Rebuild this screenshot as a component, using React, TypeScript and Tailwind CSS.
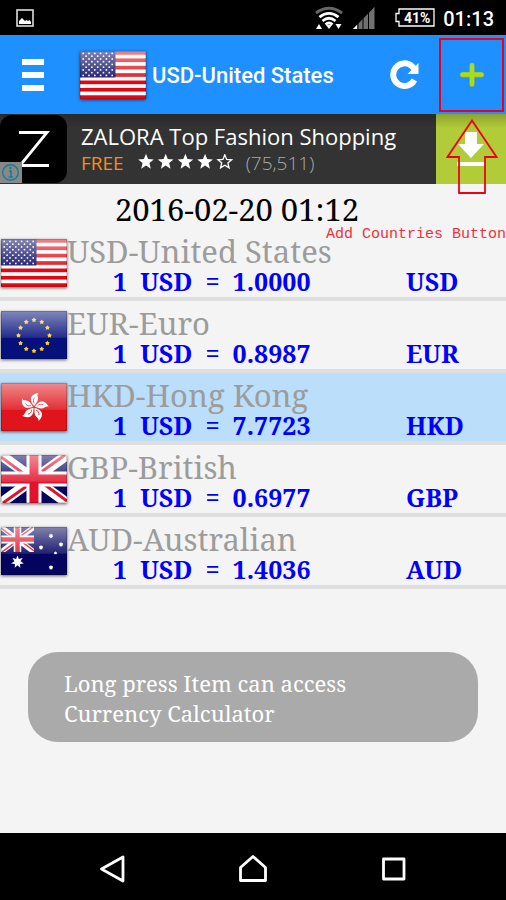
import { useId, useState } from "react";
import type { ReactNode } from "react";

type Rate = {
  code: string;
  name: string;
  value: string;
};

const rates: Rate[] = [
  { code: "USD", name: "United States", value: "1.0000" },
  { code: "EUR", name: "Euro", value: "0.8987" },
  { code: "HKD", name: "Hong Kong", value: "7.7723" },
  { code: "GBP", name: "British", value: "0.6977" },
  { code: "AUD", name: "Australian", value: "1.4036" },
];

const starPoints = (cx: number, cy: number, outer: number, inner: number, spikes = 5) =>
  Array.from({ length: spikes * 2 }, (_, i) => {
    const r = i % 2 ? inner : outer;
    const a = (Math.PI * i) / spikes - Math.PI / 2;
    return `${(cx + r * Math.cos(a)).toFixed(2)},${(cy + r * Math.sin(a)).toFixed(2)}`;
  }).join(" ");

const UsFlag = () => (
  <>
    <rect width="66" height="48" fill="#fff" />
    {[0, 1, 2, 3, 4, 5, 6].map((i) => (
      <rect key={i} y={i * 7.38} width="66" height="3.69" fill="#e30613" />
    ))}
    <rect width="35.5" height="26.5" fill="#0a0a64" />
    {Array.from({ length: 9 }, (_, row) =>
      Array.from({ length: row % 2 ? 5 : 6 }, (_, col) => (
        <circle
          key={`${row}-${col}`}
          cx={3.2 + col * 5.8 + (row % 2 ? 2.9 : 0)}
          cy={2.4 + row * 2.75}
          r="0.9"
          fill="#fff"
        />
      )),
    )}
  </>
);

const EuFlag = () => (
  <>
    <rect width="66" height="48" fill="#06107a" />
    {Array.from({ length: 12 }, (_, i) => {
      const a = (Math.PI * i) / 6;
      return (
        <polygon
          key={i}
          points={starPoints(33 + 15.5 * Math.cos(a), 24.5 + 15.5 * Math.sin(a), 2.5, 1.5)}
          fill="#f5d327"
        />
      );
    })}
  </>
);

const HkFlag = () => (
  <>
    <rect width="66" height="48" fill="#e0151b" />
    {[0, 72, 144, 216, 288].map((angle) => (
      <g key={angle} transform={`translate(33 24) rotate(${angle + 8})`}>
        <path d="M0 -1C-3 -3 -5.5 -7 -3.5 -10.5C-2 -13 1 -14 2.5 -14.5C0.5 -12 3.5 -10 2.8 -7C2.2 -4.5 0.8 -3 0 -1Z" fill="#fff" />
        <path d="M-0.3 -3.5C-2 -5.5 -1.8 -8 -0.5 -9.5" fill="none" stroke="#e0151b" strokeWidth="0.8" />
      </g>
    ))}
  </>
);

const UnionJack = () => (
  <>
    <rect width="66" height="48" fill="#04045f" />
    <path d="M0 0L66 48M66 0L0 48" stroke="#fff" strokeWidth="10" />
    <path d="M0 2L30 24M66 46L36 24M64 0L33 22M2 48L33 26" stroke="#e2142d" strokeWidth="3" />
    <path d="M33 0V48M0 24H66" stroke="#fff" strokeWidth="15" />
    <path d="M33 0V48M0 24H66" stroke="#e2142d" strokeWidth="9" />
  </>
);

const AuFlag = () => (
  <>
    <rect width="66" height="48" fill="#04045f" />
    <svg width="33" height="25" viewBox="0 0 66 48" preserveAspectRatio="none">
      <UnionJack />
    </svg>
    <polygon points={starPoints(16.5, 35, 6.5, 3.2, 7)} fill="#fff" />
    {[
      [50, 9, 2.4],
      [40, 20.5, 2.4],
      [60, 17.5, 2.4],
      [54.5, 26, 1.7],
      [50, 40.5, 2.4],
    ].map(([x, y, r]) => (
      <polygon key={`${x}-${y}`} points={starPoints(x, y, r, r * 0.65, 7)} fill="#fff" />
    ))}
  </>
);

const flags: Record<string, () => ReactNode> = {
  USD: UsFlag,
  EUR: EuFlag,
  HKD: HkFlag,
  GBP: UnionJack,
  AUD: AuFlag,
};

const Flag = ({ code }: { code: string }) => {
  const gloss = useId();
  const Artwork = flags[code];

  return (
    <svg viewBox="0 0 66 48" className="h-12 w-[66px] shrink-0 shadow-[0_1px_3px_rgba(0,0,0,0.6)]" aria-hidden="true">
      <defs>
        <linearGradient id={gloss} x1="0" y1="0" x2="0" y2="1">
          <stop offset="0" stopColor="#fff" stopOpacity="0.5" />
          <stop offset="0.55" stopColor="#fff" stopOpacity="0.12" />
          <stop offset="0.56" stopColor="#fff" stopOpacity="0" />
        </linearGradient>
      </defs>
      <Artwork />
      <rect width="66" height="48" fill={`url(#${gloss})`} />
      <rect x="0.5" y="0.5" width="65" height="47" fill="none" stroke="#000" strokeOpacity="0.18" />
    </svg>
  );
};

const StatusBar = () => (
  <div className="flex h-[35px] items-center bg-black pr-3 pl-4 text-white">
    <svg viewBox="0 0 18 18" className="size-[18px]" aria-hidden="true">
      <rect x="1" y="1" width="16" height="16" fill="none" stroke="#ddd" strokeWidth="1.6" />
      <path d="M3 15V12L6 9L9 12L10.5 11L12 12L13.5 11L15 13V15Z" fill="#fff" />
    </svg>
    <div className="ml-auto flex items-center">
      <svg viewBox="0 0 28 24" className="h-6 w-7" aria-hidden="true">
        <g fill="none" strokeWidth="2.8">
          <path d="M1 7Q14 -2.5 27 7" stroke="#666" />
          <path d="M4.5 11.2Q14 3.5 23.5 11.2" stroke="#fff" />
          <path d="M7.5 15Q14 9.5 20.5 15" stroke="#fff" />
          <path d="M10.5 18.5Q14 15.5 17.5 18.5" stroke="#fff" />
        </g>
        <path d="M11 19H17L14 23ZM1 23L4 18L7 23ZM20.5 18H26.5L23.5 23Z" fill="#fff" />
      </svg>
      <svg viewBox="0 0 22 22" className="ml-2.5 size-[22px]" aria-hidden="true">
        <path d="M21.5 0V22H0Z" fill="#707070" />
        <path d="M4 18V22H0Z" fill="#fff" />
        <path d="M5 15V22M10 10V22M15.5 4V22" stroke="#000" strokeWidth="1" />
      </svg>
      <div className="relative ml-5 flex h-[19px] w-10 items-center justify-center">
        <svg viewBox="0 0 40 19" className="absolute inset-0 h-full w-full" aria-hidden="true">
          <path d="M4 1H39V18H4V13.5H1V5.5H4Z" fill="none" stroke="#fff" strokeWidth="1.3" />
        </svg>
        <span className="pl-1 text-sm leading-4 font-bold">41%</span>
      </div>
      <span className="ml-2 pt-0.5 text-xl leading-6 font-medium">01:13</span>
    </div>
  </div>
);

const Header = ({ rate }: { rate: Rate }) => (
  <header className="flex h-[79px] items-center bg-[#1e90ff] pr-0.5 pl-[22px] text-white">
    <button type="button" aria-label="Menu" className="flex w-[22px] flex-col gap-[7px]">
      <span className="h-1.5 bg-white" />
      <span className="h-1.5 bg-white" />
      <span className="h-1.5 bg-white" />
    </button>
    <div className="ml-9 flex items-center gap-1.5">
      <Flag code={rate.code} />
      <h1 className="pt-0.5 text-[22px] leading-7 font-medium whitespace-nowrap">
        {rate.code}-{rate.name}
      </h1>
    </div>
    <button type="button" aria-label="Refresh" className="ml-auto">
      <svg viewBox="0 0 29 29" className="size-[29px]" aria-hidden="true">
        <path d="M24.5 20A11.3 11.3 0 1 1 22 6.2L24.5 9" fill="none" stroke="#fff" strokeWidth="6" />
        <path d="M28.5 3V14H17.5Z" fill="#fff" />
      </svg>
    </button>
    <button
      type="button"
      aria-label="Add country"
      className="ml-5 flex h-[74px] w-[65px] items-center justify-center border-2 border-[#f00018]"
    >
      <svg viewBox="0 0 24 24" className="size-6" aria-hidden="true">
        <path d="M12 2.5V21.5M2.5 12H21.5" stroke="#8fb81c" strokeWidth="5" strokeLinecap="round" />
        <path d="M12 2.2V21M2.5 11.5H21.5" stroke="#a9dc1e" strokeWidth="4.4" strokeLinecap="round" />
      </svg>
    </button>
  </header>
);

const AdBanner = () => (
  <aside className="relative">
    <a href="#zalora" className="flex h-[70px] bg-linear-to-b from-[#292929] to-[#333] to-20% font-['Open_Sans','Noto_Sans',sans-serif]">
      <span className="relative my-px flex w-[67px] items-center justify-center rounded-xl bg-black">
        <svg viewBox="0 0 32 36" className="h-9 w-8" aria-hidden="true">
          <path d="M1 1.5H29L2 34.5H31" fill="none" stroke="#fff" strokeWidth="2.8" />
        </svg>
        <svg viewBox="0 0 22 21" className="absolute bottom-0 left-0 h-[21px] w-[22px]" aria-hidden="true">
          <rect width="22" height="21" fill="#888" />
          <circle cx="10.5" cy="10.5" r="7.8" fill="none" stroke="#147f93" strokeWidth="1.4" />
          <path d="M9 9H11V15M8.5 15H13" fill="none" stroke="#147f93" strokeWidth="1.6" />
          <circle cx="10.5" cy="6" r="1.2" fill="#147f93" />
        </svg>
      </span>
      <span className="flex flex-1 flex-col justify-center pl-3.5 whitespace-nowrap">
        <span className="text-[22px] leading-7 text-white">ZALORA Top Fashion Shopping</span>
        <span className="flex items-center text-[19px] leading-[26px]">
          <span className="text-[#f0911e]">FREE</span>
          <svg viewBox="0 0 96 18" className="ml-3.5 h-[18px] w-24" aria-label="4 of 5 stars">
            {[0, 1, 2, 3].map((i) => (
              <polygon key={i} points={starPoints(8 + i * 19.7, 8, 8.2, 3.6)} fill="#fff" />
            ))}
            <polygon points={starPoints(86.8, 8, 7.2, 3.2)} fill="none" stroke="#fff" strokeWidth="1.3" />
          </svg>
          <span className="ml-3 font-light text-[#aaa]">(75,511)</span>
        </span>
      </span>
      <span className="flex w-[70px] justify-center bg-[#b1cb39] bg-linear-to-b from-black/20 to-transparent to-20% pt-[18px]">
        <svg viewBox="0 0 28 36" className="h-9 w-7" aria-hidden="true">
          <path d="M8 0H20V12H27L14 26L1 12H8Z" fill="#fff" />
          <path d="M0 32H28" stroke="#fff" strokeWidth="4" />
        </svg>
      </span>
    </a>
    <svg viewBox="0 0 52 76" className="absolute top-[5px] right-2 h-[76px] w-[52px]" aria-hidden="true">
      <path d="M26 1.5L50.5 38H39V74H13V38H1.5Z" fill="none" stroke="#f00018" strokeWidth="1.8" />
    </svg>
    <p className="absolute top-[111px] right-0 font-['Liberation_Mono',monospace] text-[15px] leading-5 text-[#f0303c]">
      Add Countries Button
    </p>
  </aside>
);

type RateRowProps = {
  rate: Rate;
  selected: boolean;
  onSelect: () => void;
};

const RateRow = ({ rate, selected, onSelect }: RateRowProps) => (
  <li className="border-b-4 border-[#dedede]">
    <button
      type="button"
      onClick={onSelect}
      aria-pressed={selected}
      className={`flex h-[68px] w-full items-center pl-px text-left ${selected ? "bg-[#bbdefb]" : ""}`}
    >
      <Flag code={rate.code} />
      <span className="flex flex-1 flex-col pt-1">
        <span className="text-[31px] leading-8 text-[#9c9c9c]">
          {rate.code}-{rate.name}
        </span>
        <span className="flex pl-[46px] text-[25px] leading-7 font-bold whitespace-pre text-[#0000ff]">
          <span className="flex-1">{`1  USD  =  ${rate.value}`}</span>
          <span className="w-[100px]">{rate.code}</span>
        </span>
      </span>
    </button>
  </li>
);

const NavBar = () => (
  <nav className="flex h-[67px] items-center justify-center gap-28 bg-black pt-1">
    <button type="button" aria-label="Back">
      <svg viewBox="0 0 28 28" className="size-7" fill="none" stroke="#fff" strokeWidth="2.8" strokeLinejoin="round" aria-hidden="true">
        <path d="M24 2V26L2.5 14Z" />
      </svg>
    </button>
    <button type="button" aria-label="Home">
      <svg viewBox="0 0 28 28" className="size-7" fill="none" stroke="#fff" strokeWidth="2.8" strokeLinejoin="round" aria-hidden="true">
        <path d="M14 1.5L26.5 12.5V25.5H1.5V12.5Z" />
      </svg>
    </button>
    <button type="button" aria-label="Recent apps">
      <svg viewBox="0 0 28 28" className="size-7" fill="none" stroke="#fff" strokeWidth="2.8" strokeLinejoin="round" aria-hidden="true">
        <path d="M4.5 4H25V24H4.5Z" />
      </svg>
    </button>
  </nav>
);

export default function App() {
  const [selected, setSelected] = useState("HKD");

  return (
    <div className="flex min-h-screen flex-col bg-[#f4f4f4] font-['Roboto',sans-serif]">
      <StatusBar />
      <Header rate={rates[0]} />
      <AdBanner />

      <main className="flex flex-1 flex-col font-['Noto_Serif','DejaVu_Serif',serif]">
        <p className="h-[45px] pt-[5px] pr-8 text-center text-[31px] leading-10 text-black">2016-02-20 01:12</p>
        <ul>
          {rates.map((rate) => (
            <RateRow
              key={rate.code}
              rate={rate}
              selected={rate.code === selected}
              onSelect={() => setSelected(rate.code)}
            />
          ))}
        </ul>
        <p
          role="status"
          className="mx-7 mt-[63px] rounded-[30px] bg-[#aaa] pt-4 pr-24 pb-3.5 pl-9 text-[22px] leading-[30px] text-white"
        >
          Long press Item can access Currency Calculator
        </p>
      </main>

      <NavBar />
    </div>
  );
}
